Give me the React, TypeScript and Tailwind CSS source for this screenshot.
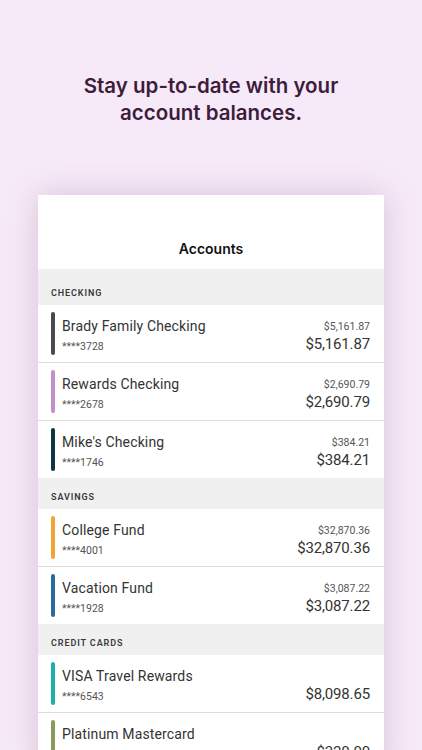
import React from 'react';

interface Account {
  name: string;
  number: string;
  color: string;
  available?: string;
  balance: string;
}

interface Section {
  title: string;
  accounts: Account[];
}

const sections: Section[] = [
  {
    title: 'CHECKING',
    accounts: [
      { name: 'Brady Family Checking', number: '****3728', color: '#4a4a4c', available: '$5,161.87', balance: '$5,161.87' },
      { name: 'Rewards Checking', number: '****2678', color: '#c390c6', available: '$2,690.79', balance: '$2,690.79' },
      { name: "Mike's Checking", number: '****1746', color: '#0e3542', available: '$384.21', balance: '$384.21' },
    ],
  },
  {
    title: 'SAVINGS',
    accounts: [
      { name: 'College Fund', number: '****4001', color: '#f1a535', available: '$32,870.36', balance: '$32,870.36' },
      { name: 'Vacation Fund', number: '****1928', color: '#2a6b9c', available: '$3,087.22', balance: '$3,087.22' },
    ],
  },
  {
    title: 'CREDIT CARDS',
    accounts: [
      { name: 'VISA Travel Rewards', number: '****6543', color: '#1cb0a8', balance: '$8,098.65' },
      { name: 'Platinum Mastercard', number: '****2219', color: '#899a5c', balance: '$320.00' },
    ],
  },
];

const AccountRow: React.FC<{ account: Account; last: boolean }> = ({ account, last }) => (
  <div className={`flex items-start bg-white pl-[13px] pr-[14px] pt-[7px] ${last ? 'h-[57px]' : 'h-[58px] border-b border-[#dedede]'}`}>
    <div className="h-[43px] w-[4px] rounded-full" style={{ backgroundColor: account.color }} />
    <div className="ml-[7px] mt-[4px] flex flex-col">
      <span className="text-[14px] leading-[20px] tracking-[0.01em] text-[#333333]">{account.name}</span>
      <span className="mt-[4px] text-[10.5px] leading-[14px] text-[#555555]">{account.number}</span>
    </div>
    <div className="ml-auto mt-[8px] flex flex-col items-end">
      <span className="h-[14px] text-[10.5px] leading-[14px] text-[#555555]">{account.available}</span>
      <span className="text-[15px] leading-[20px] tracking-[-0.01em] text-[#333333]">{account.balance}</span>
    </div>
  </div>
);

export default function App() {
  return (
    <div
      className="flex h-[750px] flex-col overflow-hidden bg-[#f7eaf8]"
      style={{ fontFamily: 'Roboto, "Noto Sans", sans-serif' }}
    >
      <h1
        className="pt-[72px] text-center text-[20.5px] font-semibold leading-[27px] text-[#3e1c3c]"
        style={{ fontFamily: 'Inter, "Noto Sans", sans-serif' }}
      >
        Stay up-to-date with your
        <br />
        account balances.
      </h1>

      <div className="mx-auto mt-[69px] w-[346px] bg-white shadow-[0_0_30px_rgba(90,60,100,0.22)]">
        <div className="flex h-[74px] items-end justify-center pb-[10px]">
          <span
            className="text-[14px] font-semibold leading-[20px] text-[#111111]"
            style={{ fontFamily: 'Inter, "Noto Sans", sans-serif' }}
          >
            Accounts
          </span>
        </div>

        {sections.map((section, i) => (
          <div key={section.title}>
            <div className={`flex items-end bg-[#f0f0f0] pb-[6px] pl-[13px] ${i === 0 ? 'h-[36px]' : 'h-[31px]'}`}>
              <span className="text-[9px] font-semibold leading-[12px] tracking-[0.1em] text-[#3a3a3a]">
                {section.title}
              </span>
            </div>
            {section.accounts.map((account, j) => (
              <AccountRow key={account.number} account={account} last={j === section.accounts.length - 1} />
            ))}
          </div>
        ))}
      </div>
    </div>
  );
}
